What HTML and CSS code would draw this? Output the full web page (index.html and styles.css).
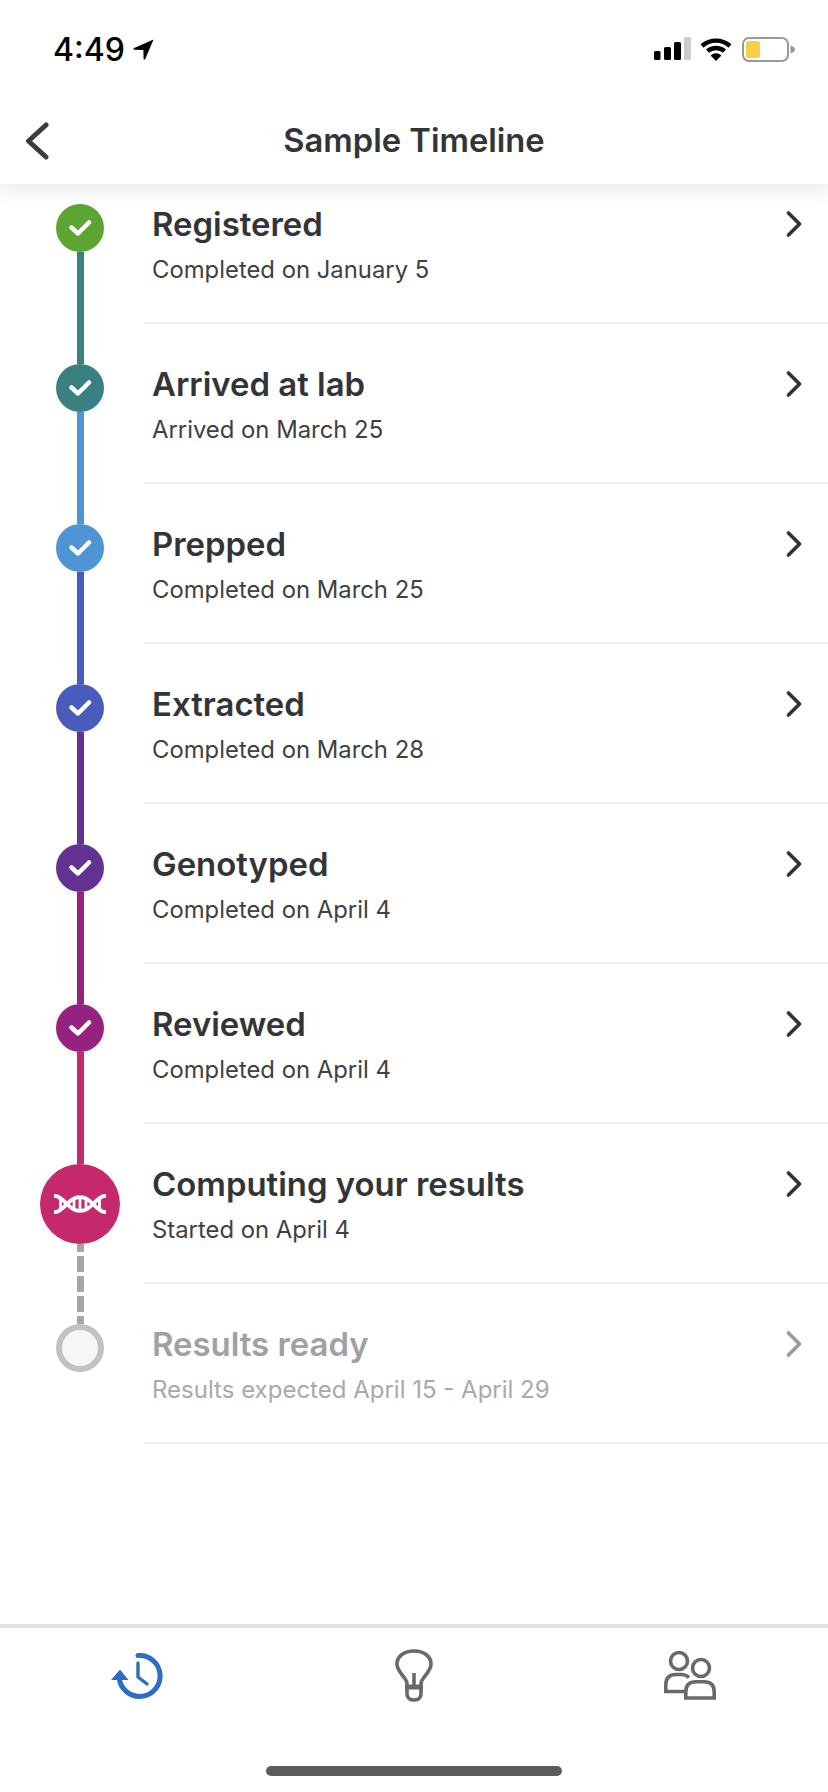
FILE: index.html
```html
<!DOCTYPE html>
<html lang="en">
<head>
<meta charset="utf-8">
<title>Sample Timeline</title>
<link rel="stylesheet" href="styles.css">
</head>
<body>
<div class="phone">
  <header class="top">
    <div class="status">
      <div class="status-left">
        <span class="time">4:49</span>
        <svg class="loc" width="21" height="21" viewBox="0 0 21 21"><path d="M20.5 .6 L.6 9.2 Q0 10.6 1.4 10.8 L10.4 11 L10.6 20 Q11 21 12.2 20.2 Z" fill="#000"/></svg>
      </div>
      <div class="status-right">
        <svg width="37" height="24" viewBox="0 0 37 24"><rect x="0" y="14" width="6.5" height="9" rx="1.5" fill="#000"/><rect x="10" y="10" width="7" height="13" rx="1.5" fill="#000"/><rect x="20" y="5" width="7" height="18" rx="1.5" fill="#000"/><rect x="30" y="0" width="7" height="23" rx="1.5" fill="#ccc"/></svg>
        <svg class="wifi" width="32" height="24" viewBox="0 0 32 24"><path d="M2 9 A21 21 0 0 1 30 9" fill="none" stroke="#000" stroke-width="4.4"/><path d="M7.5 14.2 A13 13 0 0 1 24.5 14.2" fill="none" stroke="#000" stroke-width="4.4"/><path d="M16 24 L10.6 18.4 A8 8 0 0 1 21.4 18.4 Z" fill="#000"/></svg>
        <svg class="batt" width="53" height="25" viewBox="0 0 53 25"><rect x="1" y="1" width="45" height="23" rx="6" fill="none" stroke="#999" stroke-width="2"/><rect x="4" y="4" width="14" height="17" rx="2.5" fill="#f8cf45"/><path d="M48.5 8.5 Q53 10 53 12.5 Q53 15 48.5 16.5 Z" fill="#999"/></svg>
      </div>
    </div>
    <div class="nav">
      <svg class="back" width="24" height="38" viewBox="0 0 24 38"><path d="M21 3 L3.5 19 L21 35" fill="none" stroke="#3b3c3f" stroke-width="5" stroke-linecap="round" stroke-linejoin="round"/></svg>
      <h1 class="nav-title">Sample Timeline</h1>
    </div>
  </header>

  <main class="list">
    <article class="row">
      <div class="rail">
        <span class="seg"></span>
        <span class="dot green"><svg width="24" height="20" viewBox="0 0 24 20"><path d="M3.5 9.500 L10 15.500 L21 4.500" class="tick"/></svg></span>
        <span class="seg grow teal"></span>
      </div>
      <div class="body"><div class="text"><h2 class="name">Registered</h2><p class="sub">Completed on January 5</p></div><svg class="chev" width="16" height="26" viewBox="0 0 16 26"><path d="M2.5 2 L13.5 13 L2.5 24" /></svg></div>
    </article>
    <article class="row">
      <div class="rail">
        <span class="seg teal"></span>
        <span class="dot teal"><svg width="24" height="20" viewBox="0 0 24 20"><path d="M3.5 9.500 L10 15.500 L21 4.500" class="tick"/></svg></span>
        <span class="seg grow blue"></span>
      </div>
      <div class="body"><div class="text"><h2 class="name">Arrived at lab</h2><p class="sub">Arrived on March 25</p></div><svg class="chev" width="16" height="26" viewBox="0 0 16 26"><path d="M2.5 2 L13.5 13 L2.5 24" /></svg></div>
    </article>
    <article class="row">
      <div class="rail">
        <span class="seg blue"></span>
        <span class="dot blue"><svg width="24" height="20" viewBox="0 0 24 20"><path d="M3.5 9.500 L10 15.500 L21 4.500" class="tick"/></svg></span>
        <span class="seg grow indigo"></span>
      </div>
      <div class="body"><div class="text"><h2 class="name">Prepped</h2><p class="sub">Completed on March 25</p></div><svg class="chev" width="16" height="26" viewBox="0 0 16 26"><path d="M2.5 2 L13.5 13 L2.5 24" /></svg></div>
    </article>
    <article class="row">
      <div class="rail">
        <span class="seg indigo"></span>
        <span class="dot indigo"><svg width="24" height="20" viewBox="0 0 24 20"><path d="M3.5 9.500 L10 15.500 L21 4.500" class="tick"/></svg></span>
        <span class="seg grow purple"></span>
      </div>
      <div class="body"><div class="text"><h2 class="name">Extracted</h2><p class="sub">Completed on March 28</p></div><svg class="chev" width="16" height="26" viewBox="0 0 16 26"><path d="M2.5 2 L13.5 13 L2.5 24" /></svg></div>
    </article>
    <article class="row">
      <div class="rail">
        <span class="seg purple"></span>
        <span class="dot purple"><svg width="24" height="20" viewBox="0 0 24 20"><path d="M3.5 9.500 L10 15.500 L21 4.500" class="tick"/></svg></span>
        <span class="seg grow magenta"></span>
      </div>
      <div class="body"><div class="text"><h2 class="name">Genotyped</h2><p class="sub">Completed on April 4</p></div><svg class="chev" width="16" height="26" viewBox="0 0 16 26"><path d="M2.5 2 L13.5 13 L2.5 24" /></svg></div>
    </article>
    <article class="row">
      <div class="rail">
        <span class="seg magenta"></span>
        <span class="dot magenta"><svg width="24" height="20" viewBox="0 0 24 20"><path d="M3.5 9.500 L10 15.500 L21 4.500" class="tick"/></svg></span>
        <span class="seg grow pink"></span>
      </div>
      <div class="body"><div class="text"><h2 class="name">Reviewed</h2><p class="sub">Completed on April 4</p></div><svg class="chev" width="16" height="26" viewBox="0 0 16 26"><path d="M2.5 2 L13.5 13 L2.5 24" /></svg></div>
    </article>
    <article class="row">
      <div class="rail">
        <span class="seg pink"></span>
        <span class="dot big pink">
          <svg width="52" height="20" viewBox="0 0 52 20">
            <path d="M1 1.800 C6 2.500 9 6 13 10 S20 16.800 26 16.800 S35 14 39 10 S46 2.500 51 1.800 M1 18.200 C6 17.500 9 14 13 10 S20 3.200 26 3.200 S35 6 39 10 S46 17.500 51 18.200" fill="none" stroke="#fff" stroke-width="3.800" stroke-linecap="round"/>
            <path d="M6.500 3 V17 M45.500 3 V17 M20 5 V15 M26 4 V16 M32 5 V15" fill="none" stroke="#fff" stroke-width="2.800"/>
          </svg>
        </span>
        <span class="seg grow dash"></span>
      </div>
      <div class="body"><div class="text"><h2 class="name">Computing your results</h2><p class="sub">Started on April 4</p></div><svg class="chev" width="16" height="26" viewBox="0 0 16 26"><path d="M2.5 2 L13.5 13 L2.5 24" /></svg></div>
    </article>
    <article class="row pending">
      <div class="rail">
        <span class="seg dash"></span>
        <span class="dot ring"></span>
      </div>
      <div class="body"><div class="text"><h2 class="name">Results ready</h2><p class="sub">Results expected April 15 - April 29</p></div><svg class="chev" width="16" height="26" viewBox="0 0 16 26"><path d="M2.5 2 L13.5 13 L2.5 24" /></svg></div>
    </article>
  </main>

  <nav class="tabs">
    <div class="tab-row">
      <svg class="tab-a" width="52" height="46" viewBox="0 0 52 46"><path d="M27 2.500 A20.500 20.500 0 1 1 8.200 25" fill="none" stroke="#2f6cc4" stroke-width="5" stroke-linecap="round"/><path d="M0 27 L9 16.500 L17.500 27 Z" fill="#2f6cc4"/><path d="M27 10 V24 L36 31" fill="none" stroke="#2f6cc4" stroke-width="3.400" stroke-linecap="round" stroke-linejoin="round"/></svg>
      <svg class="tab-b" width="38" height="53" viewBox="0 0 38 53"><path d="M12 38 V35 C12 31 10 30 8 27 C5 23 2 20 2 15 C2 7 9.500 2 19 2 C28.500 2 36 7 36 15 C36 20 33 23 30 27 C28 30 26 31 26 35 V38" fill="none" stroke="#68696b" stroke-width="3.600"/><path d="M12 38 V45 C12 49 15 51 19 51 C23 51 26 49 26 45 V38 M19 24 V38" fill="none" stroke="#68696b" stroke-width="3.600"/><path d="M10 38 H28" fill="none" stroke="#68696b" stroke-width="5"/></svg>
      <svg class="tab-c" width="52" height="50" viewBox="0 0 52 50"><circle cx="15" cy="11" r="8.500" fill="none" stroke="#68696b" stroke-width="3.600"/><circle cx="37" cy="18" r="8.500" fill="none" stroke="#68696b" stroke-width="3.600"/><path d="M21 41.500 H1.800 V35 Q1.800 24.500 12 24.500 H17 Q22 24.500 25 27.500" fill="none" stroke="#68696b" stroke-width="3.600"/><path d="M21.800 48 H50.200 V42 Q50.200 31.800 40 31.800 H32 Q21.800 31.800 21.800 42 Z" fill="none" stroke="#68696b" stroke-width="3.600"/></svg>
    </div>
    <div class="home"></div>
  </nav>
</div>
</body>
</html>
```
FILE: styles.css
```css
* { box-sizing: border-box; }
html, body { margin: 0; padding: 0; background: #fff; }
.phone {
  width: 828px;
  height: 1792px;
  overflow: hidden;
  display: flex;
  flex-direction: column;
  font-family: Inter, "Noto Sans", sans-serif;
  color: #333437;
  background: #fff;
}

/* header */
.top {
  height: 184px;
  flex: none;
  background: #fff;
  box-shadow: 0 4px 22px rgba(0, 0, 0, .11);
  position: relative;
  z-index: 2;
}
.status {
  height: 100px;
  padding: 37px 33px 0 53px;
  display: flex;
  justify-content: space-between;
  align-items: flex-start;
}
.status-left { display: flex; align-items: flex-start; gap: 8px; }
.time {
  font-size: 32px;
  font-weight: 500;
  line-height: 26px;
  color: #000;
}
.loc { margin-top: 2px; }
.status-right { display: flex; align-items: flex-start; gap: 9px; }
.batt { margin-left: 1px; }
.nav {
  height: 84px;
  display: flex;
  align-items: flex-start;
  padding: 22px 0 0 25px;
}
.back { flex: none; }
.nav-title {
  margin: 0;
  flex: 1;
  text-align: center;
  font-size: 32.7px;
  line-height: 36px;
  font-weight: 570;
  padding-right: 49px;
  color: #333437;
}

/* list */
.list {
  flex: 1;
  margin-top: -20px;
  display: flex;
  flex-direction: column;
}
.row { height: 160px; flex: none; display: flex; }
.rail {
  width: 144px;
  padding-left: 16px;
  flex: none;
  display: flex;
  flex-direction: column;
  align-items: center;
}
.seg { width: 7px; height: 40px; flex: none; }
.seg.grow { flex: 1; height: auto; }
.dot {
  width: 48px;
  height: 48px;
  border-radius: 50%;
  flex: none;
  display: flex;
  align-items: center;
  justify-content: center;
}
.dot.big { width: 80px; height: 80px; }
.dot.ring { background: #f5f6f8; border: 6px solid #c0c2c2; }
.tick {
  fill: none;
  stroke: #fff;
  stroke-width: 4.5;
  stroke-linecap: round;
  stroke-linejoin: round;
}
.green { background: #5ca532; }
.teal { background: #3a8080; }
.blue { background: #4f94d4; }
.indigo { background: #4a5cbb; }
.purple { background: #633192; }
.magenta { background: #95227e; }
.pink { background: #c42a6b; }
.dash {
  background: repeating-linear-gradient(to bottom, #a5a6a8 0, #a5a6a8 8px, transparent 8px, transparent 12px, #a5a6a8 12px, #a5a6a8 20px);
}

.body {
  flex: 1;
  display: flex;
  justify-content: space-between;
  align-items: flex-start;
  border-bottom: 2px solid #ededed;
  padding: 40px 26px 0 8px;
}
.name {
  margin: 0;
  font-size: 32.9px;
  line-height: 40px;
  font-weight: 570;
  color: #333437;
}
.sub {
  margin: 11px 0 0;
  font-size: 23.85px;
  line-height: 30px;
  font-weight: 400;
  color: #3f4042;
}
.chev { margin-top: 7px; fill: none; stroke: #333437; stroke-width: 3.6; stroke-linecap: round; stroke-linejoin: round; }
.pending .name { color: #a0a1a3; }
.pending .sub { color: #a8a9ab; font-size: 24px; }
.pending .chev { stroke: #9a9b9d; }

/* tab bar */
.tabs {
  height: 168px;
  flex: none;
  border-top: 4px solid #e3e3e3;
  background: #fff;
  display: flex;
  flex-direction: column;
  align-items: center;
}
.tab-row {
  width: 100%;
  height: 138px;
  display: flex;
  align-items: flex-start;
  justify-content: space-between;
  padding: 21px 112px 0 111px;
}
.tab-a { margin-top: 4px; }
.tab-c { margin-top: 1px; }
.home { width: 296px; height: 10px; border-radius: 5px; background: #5c5c5c; }
```
